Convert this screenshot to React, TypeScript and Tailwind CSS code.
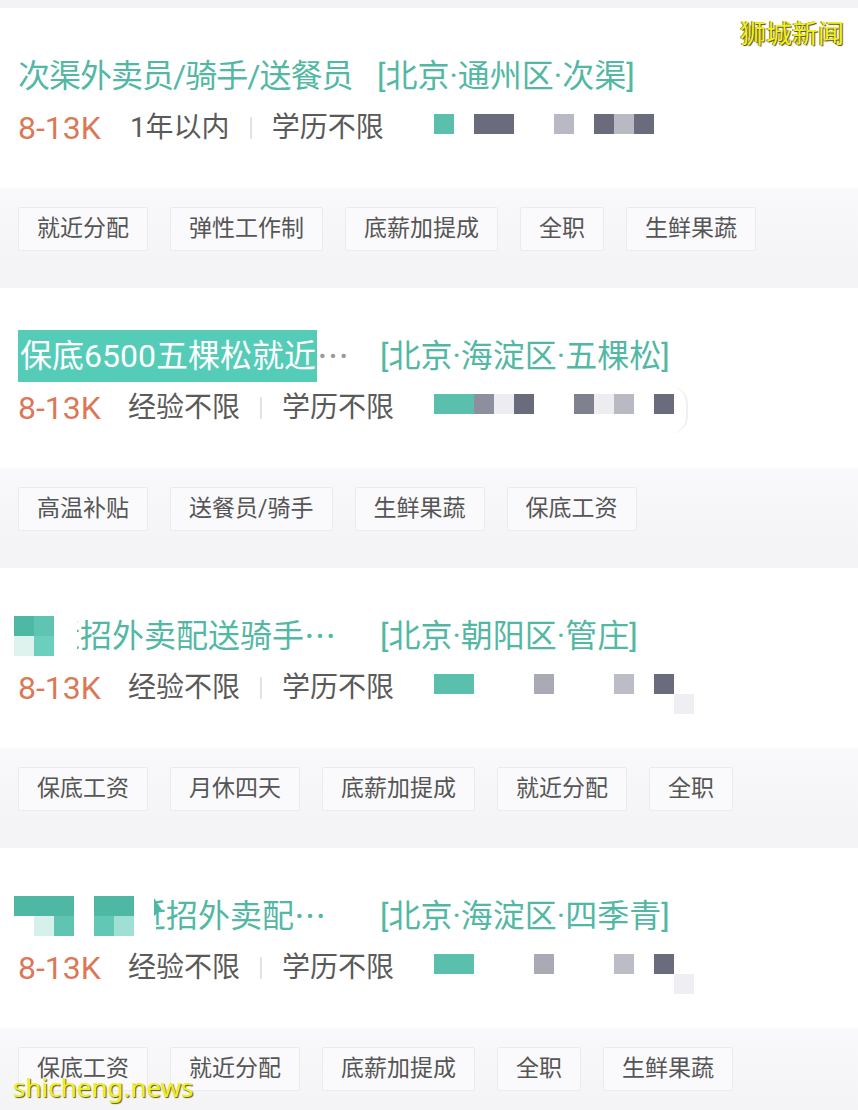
import React from "react";

const TEAL = "#52b8a3";
const FONT = { fontFamily: 'Roboto, "Noto Sans CJK SC", sans-serif' };
const CJK = { fontFamily: '"Noto Sans CJK SC", sans-serif' };

type Cell = string | null;

const C = {
  t: "#5bbfae",
  d: "#6a6b7d",
  m: "#8e8f9e",
  l: "#b8b9c3",
  v: "#ececf1",
  g: "#a9aab6",
};

function Blocks({ cells, faint, arc }: { cells: Cell[]; faint?: boolean; arc?: boolean }) {
  return (
    <div className="relative flex mb-[8px]">
      {cells.map((c, i) => (
        <div key={i} className="w-[20px] h-[20px]" style={{ background: c ?? "transparent" }} />
      ))}
      {faint && (
        <div className="absolute left-[240px] top-[20px] w-[20px] h-[20px] bg-[#efeff3]" />
      )}
      {arc && (
        <div className="absolute left-[236px] top-[-8px] w-[18px] h-[48px] rounded-r-full border-r-2 border-[#efeff1]" />
      )}
    </div>
  );
}

function Tag({ children }: { children: React.ReactNode }) {
  return (
    <div className="h-[44px] px-[18px] flex items-center border border-[#eaebef] bg-[#fafafc] rounded-[2px] text-[23px] text-[#555555] whitespace-nowrap">
      {children}
    </div>
  );
}

function Card({
  title,
  location,
  exp,
  expGap,
  cells,
  faint,
  arc,
  tags,
  titleWidth,
}: {
  title: React.ReactNode;
  location: string;
  exp: string;
  expGap: string;
  cells: Cell[];
  faint?: boolean;
  arc?: boolean;
  tags: string[];
  titleWidth: string;
}) {
  return (
    <div>
      <div className="bg-white h-[180px] px-[18px] pt-[48px]">
        <div className="flex items-center h-[40px] text-[32px] leading-[40px] whitespace-nowrap" style={{ color: TEAL }}>
          <div className={`flex items-center ${titleWidth}`}>{title}</div>
          <span>{location}</span>
        </div>
        <div className="flex items-center h-[40px] mt-[12px]">
          <div className="flex items-center w-[416px]">
            <span className="text-[32px] text-[#db7858]">8-13K</span>
            <span className={`text-[28px] text-[#5a5a5a] ${expGap}`}>{exp}</span>
            <div className="w-[2px] h-[22px] bg-[#e2e2e4] mx-[20px]" />
            <span className="text-[28px] text-[#5a5a5a]">学历不限</span>
          </div>
          <Blocks cells={cells} faint={faint} arc={arc} />
        </div>
      </div>
      <div className="h-[100px] bg-gradient-to-b from-[#f9f9fb] to-[#f3f3f6] px-[18px] pt-[19px] flex items-start gap-[22px]">
        {tags.map((t) => (
          <Tag key={t}>{t}</Tag>
        ))}
      </div>
    </div>
  );
}

function Clip({ w, children }: { w: string; children: React.ReactNode }) {
  return (
    <span className={`inline-flex justify-end overflow-hidden ${w}`}>
      <span className="shrink-0">{children}</span>
    </span>
  );
}

function Ell({ c }: { c: string }) {
  return (
    <span className={`${c} -translate-y-[2px]`} style={CJK}>
      …
    </span>
  );
}

export default function App() {
  const { t, d, m, l, v, g } = C;
  return (
    <div className="relative w-[858px] h-[1110px] overflow-hidden bg-[#f3f3f5]" style={FONT}>
      <div className="h-[8px]" />
      <Card
        title={<span className="tracking-[-1px]">次渠外卖员/骑手/送餐员</span>}
        titleWidth="w-[359px]"
        location="[北京·通州区·次渠]"
        exp="1年以内"
        expGap="ml-[29px]"
        cells={[t, null, d, d, null, null, l, null, d, l, d]}
        tags={["就近分配", "弹性工作制", "底薪加提成", "全职", "生鲜果蔬"]}
      />
      <Card
        title={
          <>
            <span className="bg-[#55ccb8] text-white py-[6px] pl-[2px] pr-[1px]">保底6500五棵松就近</span>
            <Ell c="text-[#9a9a9a]" />
          </>
        }
        titleWidth="w-[362px]"
        location="[北京·海淀区·五棵松]"
        exp="经验不限"
        expGap="ml-[27px]"
        cells={[t, t, m, v, d, null, null, "#80818f", v, l, null, d]}
        arc
        tags={["高温补贴", "送餐员/骑手", "生鲜果蔬", "保底工资"]}
      />
      <Card
        title={
          <>
            <div className="-ml-[4px] grid grid-cols-2 w-[40px] h-[40px] mr-[23px]">
              <div className="bg-[#4fb8a5]" />
              <div className="bg-[#5fc5b2]" />
              <div className="bg-[#def2ee]" />
              <div className="bg-[#6ccfbd]" />
            </div>
            <Clip w="w-[3px]">近</Clip>
            <span>招外卖配送骑手</span>
            <Ell c="" />
          </>
        }
        titleWidth="w-[362px]"
        location="[北京·朝阳区·管庄]"
        exp="经验不限"
        expGap="ml-[27px]"
        cells={[t, t, null, null, null, g, null, null, null, "#bcbcc6", null, d]}
        faint
        tags={["保底工资", "月休四天", "底薪加提成", "就近分配", "全职"]}
      />
      <Card
        title={
          <>
            <div className="-ml-[4px] grid grid-cols-3 w-[60px] h-[40px]">
              <div className="bg-[#4fb8a5]" />
              <div className="bg-[#4fb8a5]" />
              <div className="bg-[#4fb8a5]" />
              <div className="bg-white" />
              <div className="bg-[#d6f0eb]" />
              <div className="bg-[#5fc5b2]" />
            </div>
            <div className="ml-[20px] grid grid-cols-2 w-[40px] h-[40px]">
              <div className="bg-[#4fb8a5]" />
              <div className="bg-[#4fb8a5]" />
              <div className="bg-[#62c7b4]" />
              <div className="bg-[#a0dfd3]" />
            </div>
            <div className="relative ml-[20px] w-[2px] h-[40px]">
              <svg className="absolute left-0 top-[2px]" width="8" height="18" viewBox="0 0 8 18">
                <path d="M0 0 L8 12 L0 18 Z" fill="#4fb8a5" />
              </svg>
            </div>
            <Clip w="w-[10px]">近</Clip>
            <span>招外卖配</span>
            <Ell c="" />
          </>
        }
        titleWidth="w-[362px]"
        location="[北京·海淀区·四季青]"
        exp="经验不限"
        expGap="ml-[27px]"
        cells={[t, t, null, null, null, g, null, null, null, "#bcbcc6", null, d]}
        faint
        tags={["保底工资", "就近分配", "底薪加提成", "全职", "生鲜果蔬"]}
      />
      <div
        className="absolute top-[12px] right-[14px] text-[26px] text-[#f2f21a] [text-shadow:1px_1px_1px_#4a4a20,-1px_0_0_#8a8a30]"
        style={CJK}
      >
        狮城新闻
      </div>
      <div
        className="absolute left-[13px] top-[1070px] text-[26px] leading-[34px] text-[#f0f020] [text-shadow:1px_1px_1px_#55551a]"
        style={{ fontFamily: '"Noto Sans", sans-serif' }}
      >
        shicheng.news
      </div>
    </div>
  );
}
